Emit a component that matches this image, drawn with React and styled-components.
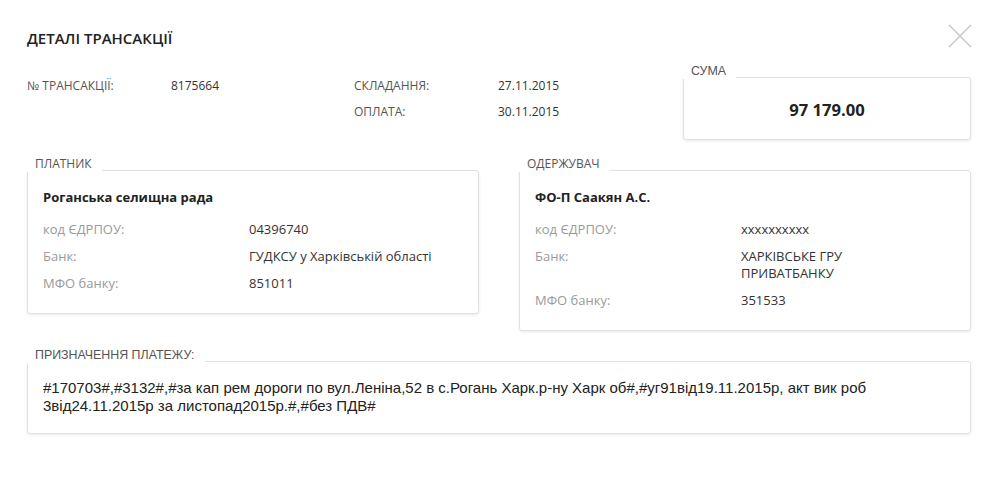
import styled, { createGlobalStyle } from 'styled-components';

const Global = createGlobalStyle`
  body {
    margin: 0;
    background: #fff;
    font-family: "Open Sans", "Liberation Sans", sans-serif;
    color: #333;
  }
`;

const Modal = styled.div`
  width: 1000px;
  box-sizing: border-box;
  padding: 24px 28px 40px 27px;
`;

const Header = styled.div`
  display: flex;
  justify-content: space-between;
  align-items: flex-start;
`;

const Title = styled.h1`
  margin: 4px 0 0;
  font-size: 15px;
  line-height: 21px;
  font-weight: 600;
  color: #222;
`;

const Close = styled.button`
  width: 24px;
  height: 24px;
  padding: 0;
  border: 0;
  background: none;
  cursor: pointer;
  display: flex;
`;

const Top = styled.div`
  display: grid;
  grid-template-columns: 144px 183px 144px 185px 1fr;
  grid-template-rows: 17px 17px;
  row-gap: 9px;
  margin-top: 28px;
  margin-right: 1px;
  font-size: 12px;
  line-height: 17px;
`;

const InfoLabel = styled.div`
  color: #555;
  grid-column: ${(p) => p.col};
  grid-row: ${(p) => p.row};
`;

const InfoValue = styled.div`
  color: #333;
  grid-column: ${(p) => p.col};
  grid-row: ${(p) => p.row};
`;

const Card = styled.div`
  position: relative;
  border: 1px solid #e2e2e2;
  border-radius: 3px;
  box-shadow: 0 1px 3px rgba(0, 0, 0, 0.09);
  background: #fff;
`;

const Legend = styled.span`
  position: absolute;
  top: -15px;
  left: -1px;
  padding: 0 10px 0 8px;
  background: #fff;
  font-family: ${(p) => (p.arial ? '"Liberation Sans", Arial, sans-serif' : '"Open Sans", sans-serif')};
  font-size: ${(p) => (p.arial ? '12.4px' : '12px')};
  line-height: 16px;
  color: #555;
  white-space: nowrap;
`;

const SumCard = styled(Card)`
  grid-column: 5;
  grid-row: 1 / span 3;
  height: 63px;
  box-sizing: border-box;
  display: flex;
  align-items: center;
  justify-content: center;
`;

const SumValue = styled.div`
  font-size: 16.6px;
  font-weight: 700;
  color: #222;
  padding-top: 1px;
`;

const Parties = styled.div`
  display: grid;
  grid-template-columns: 1fr 1fr;
  column-gap: 40px;
  align-items: start;
  margin-top: 30px;
  margin-right: 1px;
`;

const PartyBody = styled.div`
  padding: 18px 15px 21px;
  font-size: 13px;
  line-height: 17px;
`;

const Name = styled.div`
  font-size: 13px;
  font-weight: 700;
  color: #222;
  margin-bottom: 15px;
`;

const Rows = styled.div`
  display: grid;
  grid-template-columns: 206px 1fr;
  row-gap: 10px;
`;

const RowLabel = styled.div`
  color: #9a9a9a;
`;

const RowValue = styled.div`
  color: #333;
  max-width: ${(p) => (p.narrow ? '150px' : 'none')};
`;

const Purpose = styled(Card)`
  margin-top: 30px;
  margin-right: 1px;
`;

const PurposeText = styled.div`
  padding: 17px 15px 18px;
  max-width: 870px;
  font-family: "Liberation Sans", Arial, sans-serif;
  font-size: 15px;
  line-height: 18px;
  color: #222;
`;

function Party({ title, name, code, bank, mfo, narrowBank }) {
  return (
    <Card>
      <Legend>{title}</Legend>
      <PartyBody>
        <Name>{name}</Name>
        <Rows>
          <RowLabel>код ЄДРПОУ:</RowLabel>
          <RowValue>{code}</RowValue>
          <RowLabel>Банк:</RowLabel>
          <RowValue narrow={narrowBank}>{bank}</RowValue>
          <RowLabel>МФО банку:</RowLabel>
          <RowValue>{mfo}</RowValue>
        </Rows>
      </PartyBody>
    </Card>
  );
}

function App() {
  return (
    <>
      <Global />
      <Modal>
        <Header>
          <Title>ДЕТАЛІ ТРАНСАКЦІЇ</Title>
          <Close aria-label="Закрити">
            <svg width="24" height="24" viewBox="0 0 24 24">
              <path d="M1 1 L23 23 M23 1 L1 23" stroke="#c9c9c9" strokeWidth="1.6" fill="none" />
            </svg>
          </Close>
        </Header>

        <Top>
          <InfoLabel col={1} row={1}>№ ТРАНСАКЦІЇ:</InfoLabel>
          <InfoValue col={2} row={1}>8175664</InfoValue>
          <InfoLabel col={3} row={1}>СКЛАДАННЯ:</InfoLabel>
          <InfoValue col={4} row={1}>27.11.2015</InfoValue>
          <InfoLabel col={3} row={2}>ОПЛАТА:</InfoLabel>
          <InfoValue col={4} row={2}>30.11.2015</InfoValue>
          <SumCard>
            <Legend arial>СУМА</Legend>
            <SumValue>97 179.00</SumValue>
          </SumCard>
        </Top>

        <Parties>
          <Party
            title="ПЛАТНИК"
            name="Роганська селищна рада"
            code="04396740"
            bank="ГУДКСУ у Харківській області"
            mfo="851011"
          />
          <Party
            title="ОДЕРЖУВАЧ"
            name="ФО-П Саакян А.С."
            code="xxxxxxxxxx"
            bank="ХАРКІВСЬКЕ ГРУ ПРИВАТБАНКУ"
            mfo="351533"
            narrowBank
          />
        </Parties>

        <Purpose>
          <Legend arial>ПРИЗНАЧЕННЯ ПЛАТЕЖУ:</Legend>
          <PurposeText>
            #170703#,#3132#,#за кап рем дороги по вул.Леніна,52 в с.Рогань Харк.р-ну Харк об#,#уг91від19.11.2015р, акт вик роб 3від24.11.2015р за листопад2015р.#,#без ПДВ#
          </PurposeText>
        </Purpose>
      </Modal>
    </>
  );
}

export default App;
